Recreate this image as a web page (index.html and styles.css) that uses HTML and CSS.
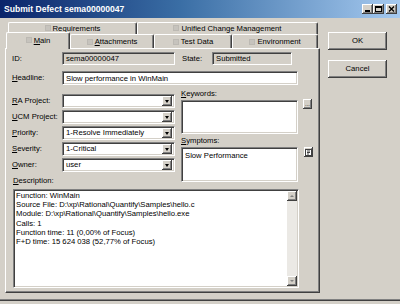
FILE: index.html
```html
<!DOCTYPE html>
<html>
<head>
<meta charset="utf-8">
<link rel="stylesheet" href="styles.css">
</head>
<body>
<div class="window">
  <div class="titlebar">
    <span class="title">Submit Defect sema00000047</span>
    <div class="tbtns">
      <span class="tbtn"><svg width="11" height="10" viewBox="0 0 11 10"><rect x="3" y="6" width="5" height="2" fill="#000"/></svg></span>
      <span class="tbtn"><svg width="11" height="10" viewBox="0 0 11 10"><rect x="2.5" y="2.5" width="6" height="5" fill="none" stroke="#000"/><rect x="2" y="2" width="7" height="2" fill="#000"/></svg></span>
      <span class="tbtn close"><svg width="11" height="10" viewBox="0 0 11 10"><path d="M3 2.5 L8 7.5 M8 2.5 L3 7.5" stroke="#000" stroke-width="1.4"/></svg></span>
    </div>
  </div>
  <div class="body">
    <div class="left">
      <div class="tabrow row1">
        <div class="tab t-req"><i class="ico"></i><span>Re<u>q</u>uirements</span></div>
        <div class="tab t-ucm"><i class="ico"></i><span>Unified Change Management</span></div>
      </div>
      <div class="tabrow row2">
        <div class="tab sel t-main"><i class="ico"></i><span><u>M</u>ain</span></div>
        <div class="tab t-att"><i class="ico"></i><span><u>A</u>ttachments</span></div>
        <div class="tab t-test"><i class="ico"></i><span>Test Data</span></div>
        <div class="tab t-env"><i class="ico"></i><span>Environment</span></div>
      </div>
      <div class="panel">
        <div class="row r-id">
          <span class="lbl w50">ID:</span>
          <div class="field dis f-id">sema00000047</div>
          <span class="lbl lbl-state">State:</span>
          <div class="field dis f-state">Submitted</div>
        </div>
        <div class="row r-head">
          <span class="lbl w50"><u>H</u>eadline:</span>
          <div class="field f-head">Slow performance in WinMain</div>
        </div>
        <div class="mid">
          <div class="lcol">
            <div class="crow"><span class="lbl w50"><u>R</u>A Project:</span><div class="field combo"><span class="ctext"></span><span class="arrow"></span></div></div>
            <div class="crow"><span class="lbl w50"><u>U</u>CM Project:</span><div class="field combo"><span class="ctext"></span><span class="arrow"></span></div></div>
            <div class="crow"><span class="lbl w50"><u>P</u>riority:</span><div class="field combo"><span class="ctext">1-Resolve Immediately</span><span class="arrow"></span></div></div>
            <div class="crow"><span class="lbl w50"><u>S</u>everity:</span><div class="field combo"><span class="ctext">1-Critical</span><span class="arrow"></span></div></div>
            <div class="crow"><span class="lbl w50"><u>O</u>wner:</span><div class="field combo"><span class="ctext">user</span><span class="arrow"></span></div></div>
            <div class="lbl desc-lbl"><u>D</u>escription:</div>
          </div>
          <div class="rcol">
            <div class="lbl kw-lbl"><u>K</u>eywords:</div>
            <div class="boxrow">
              <div class="field box kw"></div>
              <span class="mini kw-btn">...</span>
            </div>
            <div class="lbl sym-lbl"><u>S</u>ymptoms:</div>
            <div class="boxrow">
              <div class="field box sym">Slow Performance</div>
              <span class="mini sym-btn"><svg width="7" height="7" viewBox="0 0 7 7"><rect x="0.5" y="0.5" width="6" height="6" fill="#fff" stroke="#404040"/><path d="M2 2 H5 M2 3.5 H5 M2 5 H4" stroke="#404040"/></svg></span>
            </div>
          </div>
        </div>
        <div class="field desc">
          <div class="dtext">Function: WinMain<br>Source File: D:\xp\Rational\Quantify\Samples\hello.c<br>Module: D:\xp\Rational\Quantify\Samples\hello.exe<br>Calls: 1<br>Function time: 11 (0,00% of Focus)<br>F+D time: 15 624 038 (52,77% of Focus)</div>
          <div class="sbar">
            <span class="sbtn"><svg width="10" height="10" viewBox="0 0 10 10"><path d="M3 6 L7 6 L5 4 Z" fill="#808080"/></svg></span>
            <span class="sbtn"><svg width="10" height="10" viewBox="0 0 10 10"><path d="M3 4 L7 4 L5 6 Z" fill="#808080"/></svg></span>
          </div>
        </div>
      </div>
    </div>
    <div class="right">
      <div class="btn">OK</div>
      <div class="btn">Cancel</div>
    </div>
  </div>
</div>
</body>
</html>
```
FILE: styles.css
```css
* { box-sizing: border-box; margin: 0; padding: 0; }
html, body { width: 400px; height: 304px; overflow: hidden; }
body {
  background: #d4d0c8;
  font-family: "Liberation Sans", Arial, sans-serif;
  font-size: 7.7px;
  color: #000;
}
u { text-decoration: underline; text-underline-offset: 1px; }
.window {
  width: 400px;
  height: 301px;
  border-bottom: 1px solid #404040;
  box-shadow: inset 0 -1px #808080;
}
.titlebar {
  height: 18px;
  background: linear-gradient(to right, #0a246a 0%, #3a6ea5 45%, #a6caf0 100%);
  display: flex;
  align-items: center;
  justify-content: space-between;
  padding: 0 3px 0 4px;
}
.title {
  color: #fff;
  font-weight: bold;
  font-size: 8.6px;
  line-height: 10px;
  margin-top: -1px;
}
.tbtns { display: flex; align-items: center; margin-top: -1px; }
.tbtn {
  width: 11px; height: 10px;
  background: #d4d0c8;
  box-shadow: inset -1px -1px #404040, inset 1px 1px #fff, inset -2px -2px #808080;
  display: block;
}
.tbtn svg { display: block; }
.tbtn.close { margin-left: 2px; }

.body { display: flex; padding-top: 4px; }
.left { margin-left: 5px; width: 315px; display: flex; flex-direction: column; }
.tabrow { display: flex; }
.row1 { height: 12px; margin-left: 3px; }
.row2 { height: 14px; margin-left: 1px; align-items: flex-end; }
.tab {
  background: #d4d0c8;
  border-top: 1px solid #fff;
  border-left: 1px solid #fff;
  border-right: 1px solid #404040;
  box-shadow: inset -1px 0 #808080;
  border-radius: 2px 2px 0 0;
  display: flex;
  align-items: center;
  justify-content: center;
  gap: 2px;
  height: 100%;
  line-height: 9px;
  white-space: nowrap;
}
.row1 .tab { padding-bottom: 1px; }
.ico {
  display: block;
  width: 6px; height: 6px;
  background: #c6c3bd;
  border: 1px solid #bcb9b3;
}
.t-req { width: 129px; }
.t-ucm { width: 181px; }
.t-main { width: 64px; }
.t-att { width: 84px; }
.t-test { width: 78px; }
.t-env { width: 86px; }
.tab.sel {
  height: 17px;
  margin-bottom: -1px;
  position: relative;
  z-index: 2;
  padding-bottom: 2px;
}

.panel {
  width: 315px;
  height: 245px;
  border-top: 1px solid #fff;
  border-left: 1px solid #fff;
  border-right: 1px solid #404040;
  border-bottom: 1px solid #404040;
  box-shadow: inset -1px -1px #808080;
  padding: 3px 0 0 6px;
  display: flex;
  flex-direction: column;
}
.row { display: flex; align-items: center; }
.lbl { white-space: nowrap; line-height: 10px; }
.w50 { width: 50px; flex: none; }
.field {
  border: 1px solid;
  border-color: #808080 #fff #fff #808080;
  box-shadow: inset 1px 1px #404040, inset -1px -1px #d4d0c8;
  background: #fff;
  padding: 1px 2px 0 3px;
  line-height: 10px;
  white-space: nowrap;
  overflow: hidden;
}
.field.dis { background: #d4d0c8; }
.r-id { height: 13px; }
.f-id { width: 113px; height: 13px; }
.lbl-state { width: 30px; margin-left: 7px; }
.f-state { width: 80px; height: 13px; }
.r-head { margin-top: 6px; height: 14px; }
.f-head { width: 236px; height: 14px; padding-top: 2px; }

.mid { display: flex; margin-top: 3px; }
.lcol { width: 163px; padding-top: 6px; display: flex; flex-direction: column; gap: 2px; }
.crow { display: flex; align-items: center; height: 14px; }
.combo {
  width: 113px; height: 14px;
  display: flex; align-items: center;
  padding: 2px 2px 2px 3px;
}
.ctext { flex: 1; line-height: 10px; }
.arrow {
  width: 10px; height: 10px;
  background: #d4d0c8;
  box-shadow: inset -1px -1px #404040, inset 1px 1px #fff, inset -2px -2px #808080;
  position: relative;
  flex: none;
}
.arrow::after {
  content: "";
  position: absolute;
  left: 2.5px; top: 4px;
  border-left: 2.5px solid transparent;
  border-right: 2.5px solid transparent;
  border-top: 3px solid #000;
}
.desc-lbl { margin-top: 1px; margin-left: 1px; height: 12px; line-height: 12px; }
.rcol { margin-left: 6px; display: flex; flex-direction: column; }
.kw-lbl { height: 12px; line-height: 12px; }
.sym-lbl { height: 13px; line-height: 13px; }
.boxrow { display: flex; align-items: flex-start; }
.box { width: 117px; padding: 3px 3px; }
.kw { height: 34px; }
.sym { height: 35px; }
.mini {
  display: flex; align-items: center; justify-content: center;
  width: 9px; height: 10px;
  background: #d4d0c8;
  box-shadow: inset -1px -1px #404040, inset 1px 1px #fff, inset -2px -2px #808080;
  font-size: 6px; line-height: 6px;
}
.kw-btn { margin-left: 5px; margin-top: -1px; }
.sym-btn { margin-left: 6px; }

.desc {
  margin-top: 2px;
  margin-left: 1px;
  width: 286px;
  height: 99px;
  padding: 0;
  display: flex;
  white-space: normal;
}
.dtext { flex: 1; padding: 1px 0 0 2px; line-height: 9.2px; white-space: nowrap; }
.sbar {
  width: 10px;
  margin: 1px 1px 1px 0;
  background: #ebe9e5;
  display: flex; flex-direction: column; justify-content: space-between;
}
.sbtn {
  display: block; width: 10px; height: 10px;
  background: #d4d0c8;
  box-shadow: inset -1px -1px #404040, inset 1px 1px #fff, inset -2px -2px #808080;
}
.sbtn svg { display: block; }

.right { margin-left: 8px; display: flex; flex-direction: column; gap: 10px; padding-top: 10px; }
.btn {
  width: 59px; height: 18px;
  background: #d4d0c8;
  box-shadow: inset -1px -1px #404040, inset 1px 1px #fff, inset -2px -2px #808080;
  display: flex; align-items: center; justify-content: center;
  line-height: 10px;
}
```
